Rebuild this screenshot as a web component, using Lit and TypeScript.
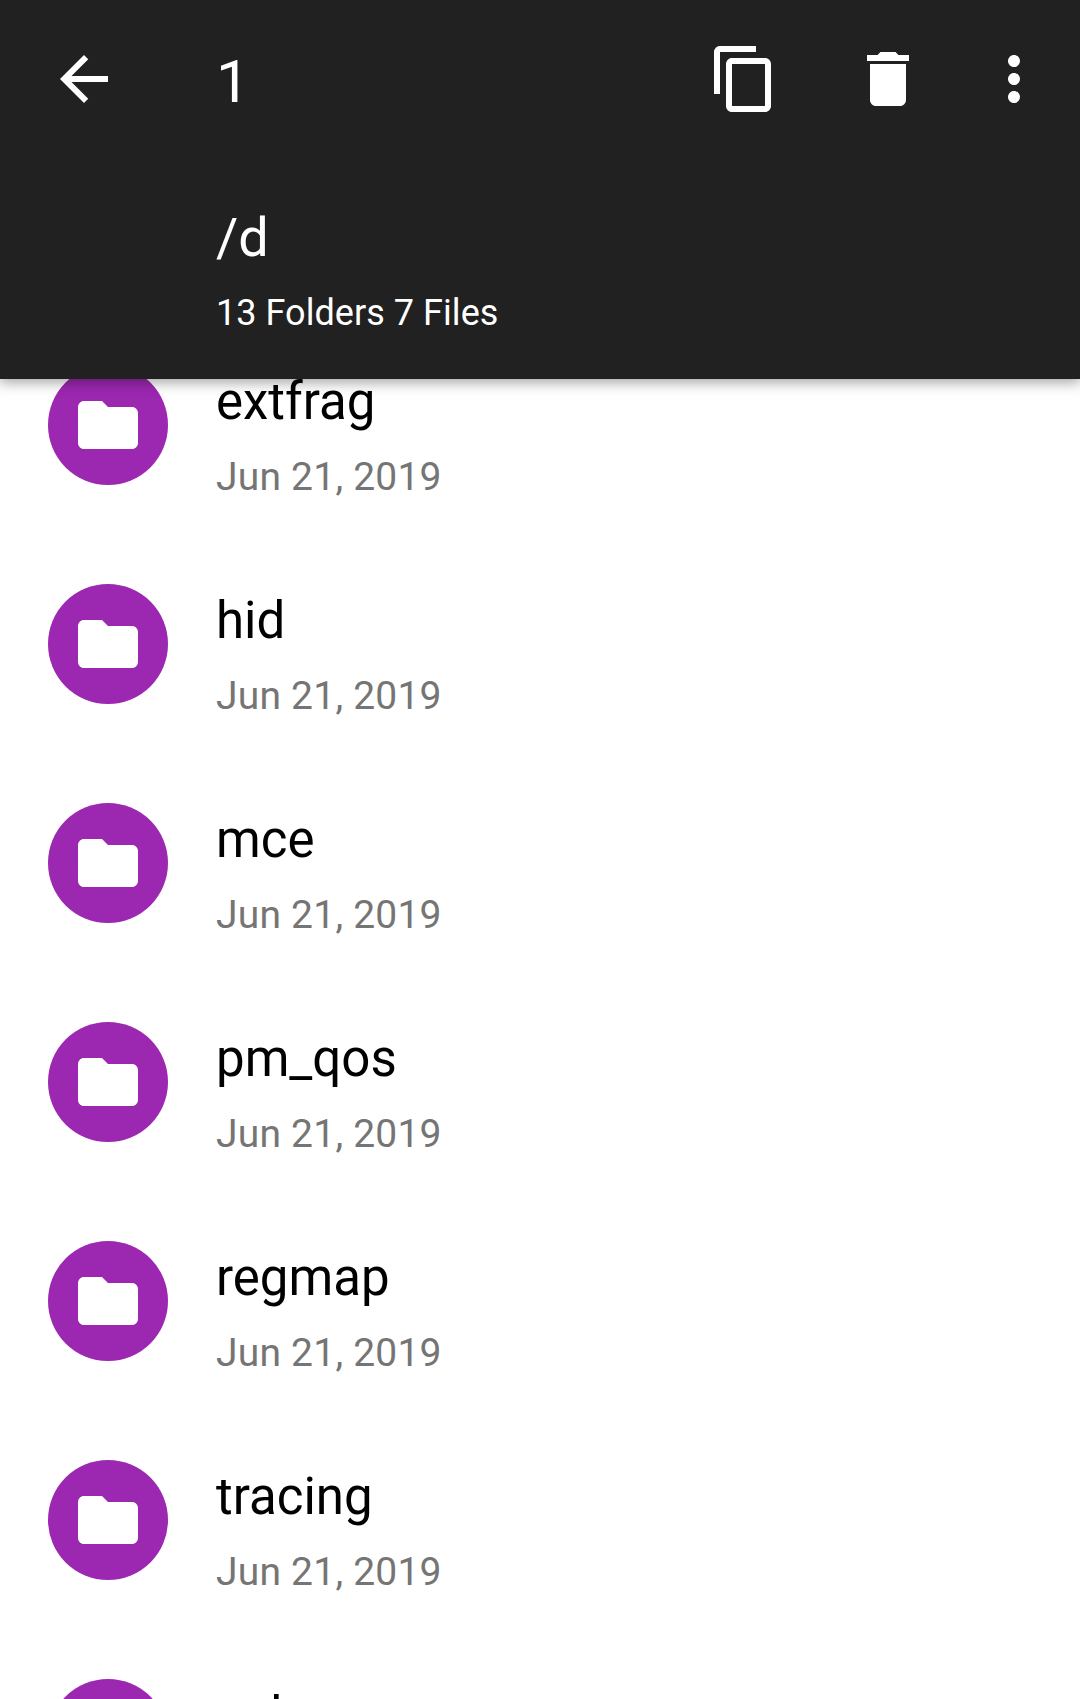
import { LitElement, html, css, svg } from "lit";
import { customElement, property } from "lit/decorators.js";

const ICONS = {
  back: svg`<path d="M20 11H7.83l5.59-5.59L12 4l-8 8 8 8 1.41-1.41L7.83 13H20v-2z"/>`,
  copy: svg`<path d="M16 1H4c-1.1 0-2 .9-2 2v14h2V3h12V1zm3 4H8c-1.1 0-2 .9-2 2v14c0 1.1.9 2 2 2h11c1.1 0 2-.9 2-2V7c0-1.1-.9-2-2-2zm0 16H8V7h11v14z"/>`,
  trash: svg`<path d="M6 19c0 1.1.9 2 2 2h8c1.1 0 2-.9 2-2V7H6v12zM19 4h-3.5l-1-1h-5l-1 1H5v2h14V4z"/>`,
  more: svg`<path d="M12 8c1.1 0 2-.9 2-2s-.9-2-2-2-2 .9-2 2 .9 2 2 2zm0 2c-1.1 0-2 .9-2 2s.9 2 2 2 2-.9 2-2-.9-2-2-2zm0 6c-1.1 0-2 .9-2 2s.9 2 2 2 2-.9 2-2-.9-2-2-2z"/>`,
  folder: svg`<path d="M10 4H4c-1.1 0-1.99.9-1.99 2L2 18c0 1.1.9 2 2 2h16c1.1 0 2-.9 2-2V8c0-1.1-.9-2-2-2h-8l-2-2z"/>`,
};

@customElement("folder-row")
class FolderRow extends LitElement {
  @property() name = "";
  @property() date = "";

  static styles = css`
    :host {
      display: flex;
      align-items: center;
      box-sizing: border-box;
      height: 219px;
      padding: 0 48px 3px;
      gap: 48px;
    }
    .badge {
      flex: none;
      display: flex;
      align-items: center;
      justify-content: center;
      width: 120px;
      height: 120px;
      border-radius: 50%;
      background: #9c27b0;
    }
    .icon {
      width: 72px;
      height: 72px;
      fill: #fff;
    }
    .text {
      display: flex;
      flex-direction: column;
      gap: 21px;
      padding-top: 23px;
    }
    .name {
      font-size: 51px;
      line-height: 60px;
      color: #000;
    }
    .date {
      font-size: 39px;
      line-height: 48px;
      letter-spacing: 0.22px;
      color: #757575;
    }
  `;

  render() {
    return html`
      <div class="badge"><svg class="icon" viewBox="0 0 24 24">${ICONS.folder}</svg></div>
      <div class="text">
        <div class="name">${this.name}</div>
        <div class="date">${this.date}</div>
      </div>
    `;
  }
}

@customElement("app-root")
class AppRoot extends LitElement {
  static styles = css`
    :host {
      display: block;
      height: 1699px;
      overflow: hidden;
      background: #fff;
      font-family: Roboto, sans-serif;
    }
    .header {
      position: relative;
      z-index: 1;
      box-sizing: border-box;
      height: 379px;
      background: #212121;
      color: #fff;
      box-shadow: 0 3px 12px 1px rgba(0, 0, 0, 0.34);
    }
    .bar {
      display: flex;
      align-items: center;
      padding: 43px 30px 0 48px;
    }
    .icon {
      flex: none;
      display: block;
      width: 72px;
      height: 72px;
      fill: #fff;
    }
    .count {
      flex: 1;
      box-sizing: border-box;
      height: 72px;
      padding: 3px 0 0 96px;
      font-size: 60px;
      line-height: 72px;
    }
    .actions {
      display: flex;
      gap: 72px;
    }
    .more {
      margin-left: -18px;
    }
    .summary {
      padding: 90px 0 0 216px;
    }
    .path {
      font-size: 54px;
      line-height: 66px;
    }
    .totals {
      margin-top: 21px;
      font-size: 36px;
      line-height: 42px;
      letter-spacing: 0.05px;
    }
    .list {
      margin-top: -62px;
    }
  `;

  private folders = ["extfrag", "hid", "mce", "pm_qos", "regmap", "tracing", "usb"];

  render() {
    return html`
      <div class="header">
        <div class="bar">
          <svg class="icon" viewBox="0 0 24 24">${ICONS.back}</svg>
          <div class="count">1</div>
          <div class="actions">
            <svg class="icon" viewBox="0 0 24 24">${ICONS.copy}</svg>
            <svg class="icon" viewBox="0 0 24 24">${ICONS.trash}</svg>
            <svg class="icon more" viewBox="0 0 24 24">${ICONS.more}</svg>
          </div>
        </div>
        <div class="summary">
          <div class="path">/d</div>
          <div class="totals">13 Folders 7 Files</div>
        </div>
      </div>
      <div class="list">
        ${this.folders.map((name) => html`<folder-row .name=${name} .date=${"Jun 21, 2019"}></folder-row>`)}
      </div>
    `;
  }
}
